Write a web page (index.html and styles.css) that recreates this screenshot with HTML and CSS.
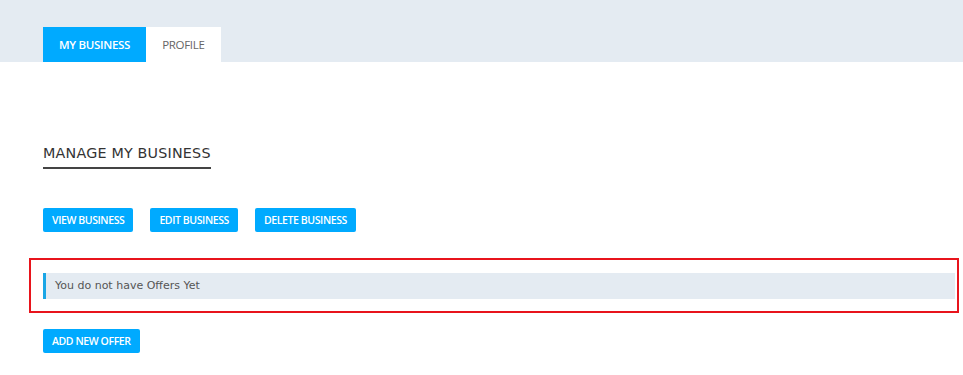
FILE: index.html
```html
<!DOCTYPE html>
<html lang="en">
<head>
    <meta charset="UTF-8">
    <meta name="viewport" content="width=device-width, initial-scale=1.0">
    <title>My Business</title>
    <link rel="stylesheet" href="styles.css">
</head>
<body>
    <div id="topbar">
        <ul class="tabs">
            <li class="tab active">MY BUSINESS</li>
            <li class="tab">PROFILE</li>
        </ul>
    </div>

    <div id="main">
        <h2 class="title">MANAGE MY BUSINESS</h2>

        <div class="actions">
            <button class="btn">VIEW BUSINESS</button>
            <button class="btn">EDIT BUSINESS</button>
            <button class="btn">DELETE BUSINESS</button>
        </div>

        <div class="highlight">
            <div class="notice">You do not have Offers Yet</div>
        </div>

        <button class="btn">ADD NEW OFFER</button>
    </div>
</body>
</html>
```

FILE: styles.css
```css
body{
    margin:0;
    font-family: "Open Sans", sans-serif;
    background:#fff;
}
#topbar{
    background:#e4ebf2;
    height:62px;
    display:flex;
    align-items:flex-end;
}
.tabs{
    list-style-type:none;
    margin:0 0 0 43px;
    padding:0;
    display:flex;
}
.tab{
    height:35px;
    line-height:35px;
    padding:0 16px;
    background:#fff;
    color:#666;
    font-size:11.5px;
    letter-spacing:-0.3px;
}
.tab.active{
    background:#00aaff;
    color:#fff;
    font-weight:600;
}
#main{
    padding:0 4px 0 29px;
}
.title{
    display:inline-block;
    margin:83px 0 0 14px;
    padding-bottom:6px;
    border-bottom:2px solid #444;
    font-family:"DejaVu Sans", sans-serif;
    font-weight:normal;
    font-size:14.3px;
    letter-spacing:0.2px;
    color:#333;
}
.actions{
    display:flex;
    gap:17px;
    margin:39px 0 0 14px;
}
.btn{
    height:24px;
    padding:0 9px;
    border:none;
    border-radius:2px;
    background:#00aaff;
    color:#fff;
    font-family:"Open Sans", sans-serif;
    font-weight:600;
    font-size:10.5px;
    letter-spacing:-0.4px;
}
.highlight{
    margin-top:26px;
    border:2px solid #e8141c;
    padding:13px 2px 12px 12px;
}
.notice{
    height:26px;
    line-height:26px;
    background:#e4ebf2;
    border-left:3px solid #1aa6e6;
    padding-left:9px;
    font-family:"DejaVu Sans", sans-serif;
    font-size:11px;
    color:#555;
}
#main > .btn{
    margin:16px 0 0 14px;
}
```
